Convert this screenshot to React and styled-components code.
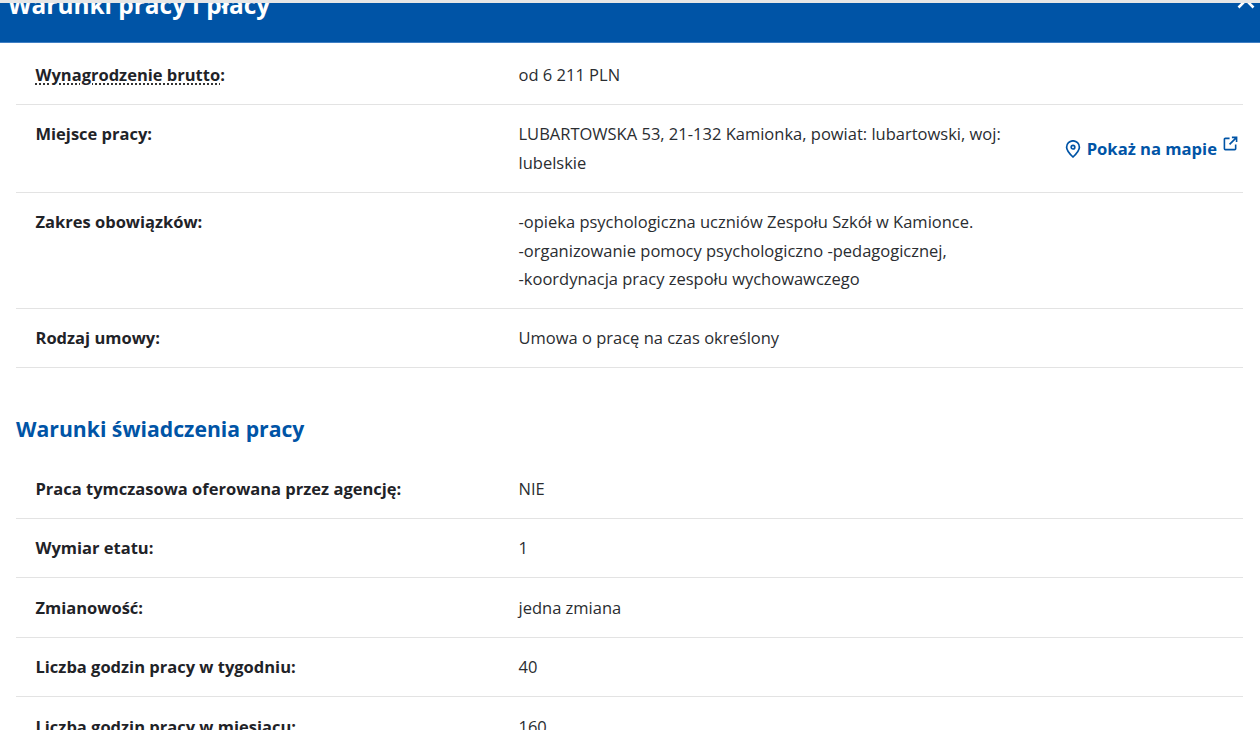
import React from "react";
import styled, { createGlobalStyle } from "styled-components";

const Global = createGlobalStyle`
  html, body { margin: 0; padding: 0; background: #fff; height: 730px; overflow: hidden; }
  body { font-family: "Open Sans", "Noto Sans", sans-serif; color: #1f2328; -webkit-font-smoothing: antialiased; }
`;
const Page = styled.div`
  height: 730px;
  overflow: hidden;
  padding-top: 3px;
  background: #fff;
  position: relative;
  &::before { content: ""; position: absolute; left: 0; right: 0; top: 0; height: 3px; background: #e6e6e6; }
`;
const Header = styled.header`
  height: 40px;
  background: #0054a6;
  position: relative;
  overflow: hidden;
  border-bottom: 1px solid #3f7fc4;
  box-sizing: border-box;
`;
const Title = styled.h2`
  margin: -14px 0 0 8px;
  font-size: 24.4px;
  line-height: 32px;
  font-weight: 700;
  color: #fff;
`;
const Close = styled.svg`
  position: absolute;
  right: 4px;
  top: -13px;
  width: 20px;
  height: 20px;
`;
const Body = styled.main`
  padding: 2.4px 17px 0 16px;
`;
const Row = styled.div`
  display: grid;
  grid-template-columns: 483px 1fr auto;
  align-items: center;
  padding: 15.5px 5px 14.5px 19.5px;
  border-bottom: 1px solid #e3e3e3;
  font-size: 16.5px;
  line-height: 28.4px;
`;
const Label = styled.div`
  font-weight: 700;
  color: #1f2328;
  align-self: start;
`;
const Abbr = styled.span`
  text-decoration: underline dotted #333 2px;
  text-underline-offset: 3px;
`;
const Value = styled.div`
  color: #2a2d31;
  align-self: start;
  max-width: ${p => p.$wide ? "none" : "490px"};
`;
const MapLink = styled.a`
  display: flex;
  align-items: center;
  color: #0054a6;
  font-weight: 700;
  font-size: 16.6px;
  white-space: nowrap;
  text-decoration: none;
`;
const PinIcon = styled.svg`
  width: 16px;
  height: 18px;
  margin-right: 6px;
  fill: none;
  stroke: #0054a6;
  stroke-width: 1.7;
`;
const ExtIcon = styled.svg`
  width: 15px;
  height: 15px;
  margin: -10px 0 0 6px;
  fill: none;
  stroke: #0054a6;
  stroke-width: 1.7;
`;
const Section = styled.h3`
  margin: 43px 0 12.2px;
  font-size: 21.2px;
  line-height: 36px;
  font-weight: 700;
  color: #0054a6;
`;

const rows2 = [
  ["Praca tymczasowa oferowana przez agencję:", "NIE"],
  ["Wymiar etatu:", "1"],
  ["Zmianowość:", "jedna zmiana"],
  ["Liczba godzin pracy w tygodniu:", "40"],
  ["Liczba godzin pracy w miesiącu:", "160"],
];

export default function App() {
  return (
    <Page>
      <Global />
      <Header>
        <Title>Warunki pracy i płacy</Title>
        <Close viewBox="0 0 20 20" fill="none" stroke="#fff" strokeWidth="2.6" aria-hidden="true">
          <path d="M2.5 2.5l15 15M17.5 2.5l-15 15" />
        </Close>
      </Header>
      <Body>
        <Row>
          <Label><Abbr>Wynagrodzenie brutto</Abbr>:</Label>
          <Value>od 6 211 PLN</Value>
        </Row>
        <Row>
          <Label>Miejsce pracy:</Label>
          <Value>LUBARTOWSKA 53, 21-132 Kamionka, powiat: lubartowski, woj: lubelskie</Value>
          <MapLink href="#">
            <PinIcon viewBox="0 0 16 18" aria-hidden="true">
              <path d="M8 17C4.2 13.4 1.6 10.5 1.6 7.2a6.4 6.4 0 0 1 12.8 0C14.4 10.5 11.8 13.4 8 17z" />
              <circle cx="8" cy="7.2" r="1.8" />
            </PinIcon>
            Pokaż na mapie
            <ExtIcon viewBox="0 0 16 16" aria-hidden="true">
              <path d="M7 2.5H2.5a1 1 0 0 0-1 1v10a1 1 0 0 0 1 1h10a1 1 0 0 0 1-1V9" />
              <path d="M9.5 1.5h5v5M14.5 1.5L7 9" />
            </ExtIcon>
          </MapLink>
        </Row>
        <Row>
          <Label>Zakres obowiązków:</Label>
          <Value $wide>
            -opieka psychologiczna uczniów Zespołu Szkół w Kamionce.<br />
            -organizowanie pomocy psychologiczno -pedagogicznej,<br />
            -koordynacja pracy zespołu wychowawczego
          </Value>
        </Row>
        <Row>
          <Label>Rodzaj umowy:</Label>
          <Value>Umowa o pracę na czas określony</Value>
        </Row>
        <Section>Warunki świadczenia pracy</Section>
        {rows2.map(([l, v]) => (
          <Row key={l}>
            <Label>{l}</Label>
            <Value>{v}</Value>
          </Row>
        ))}
      </Body>
    </Page>
  );
}
